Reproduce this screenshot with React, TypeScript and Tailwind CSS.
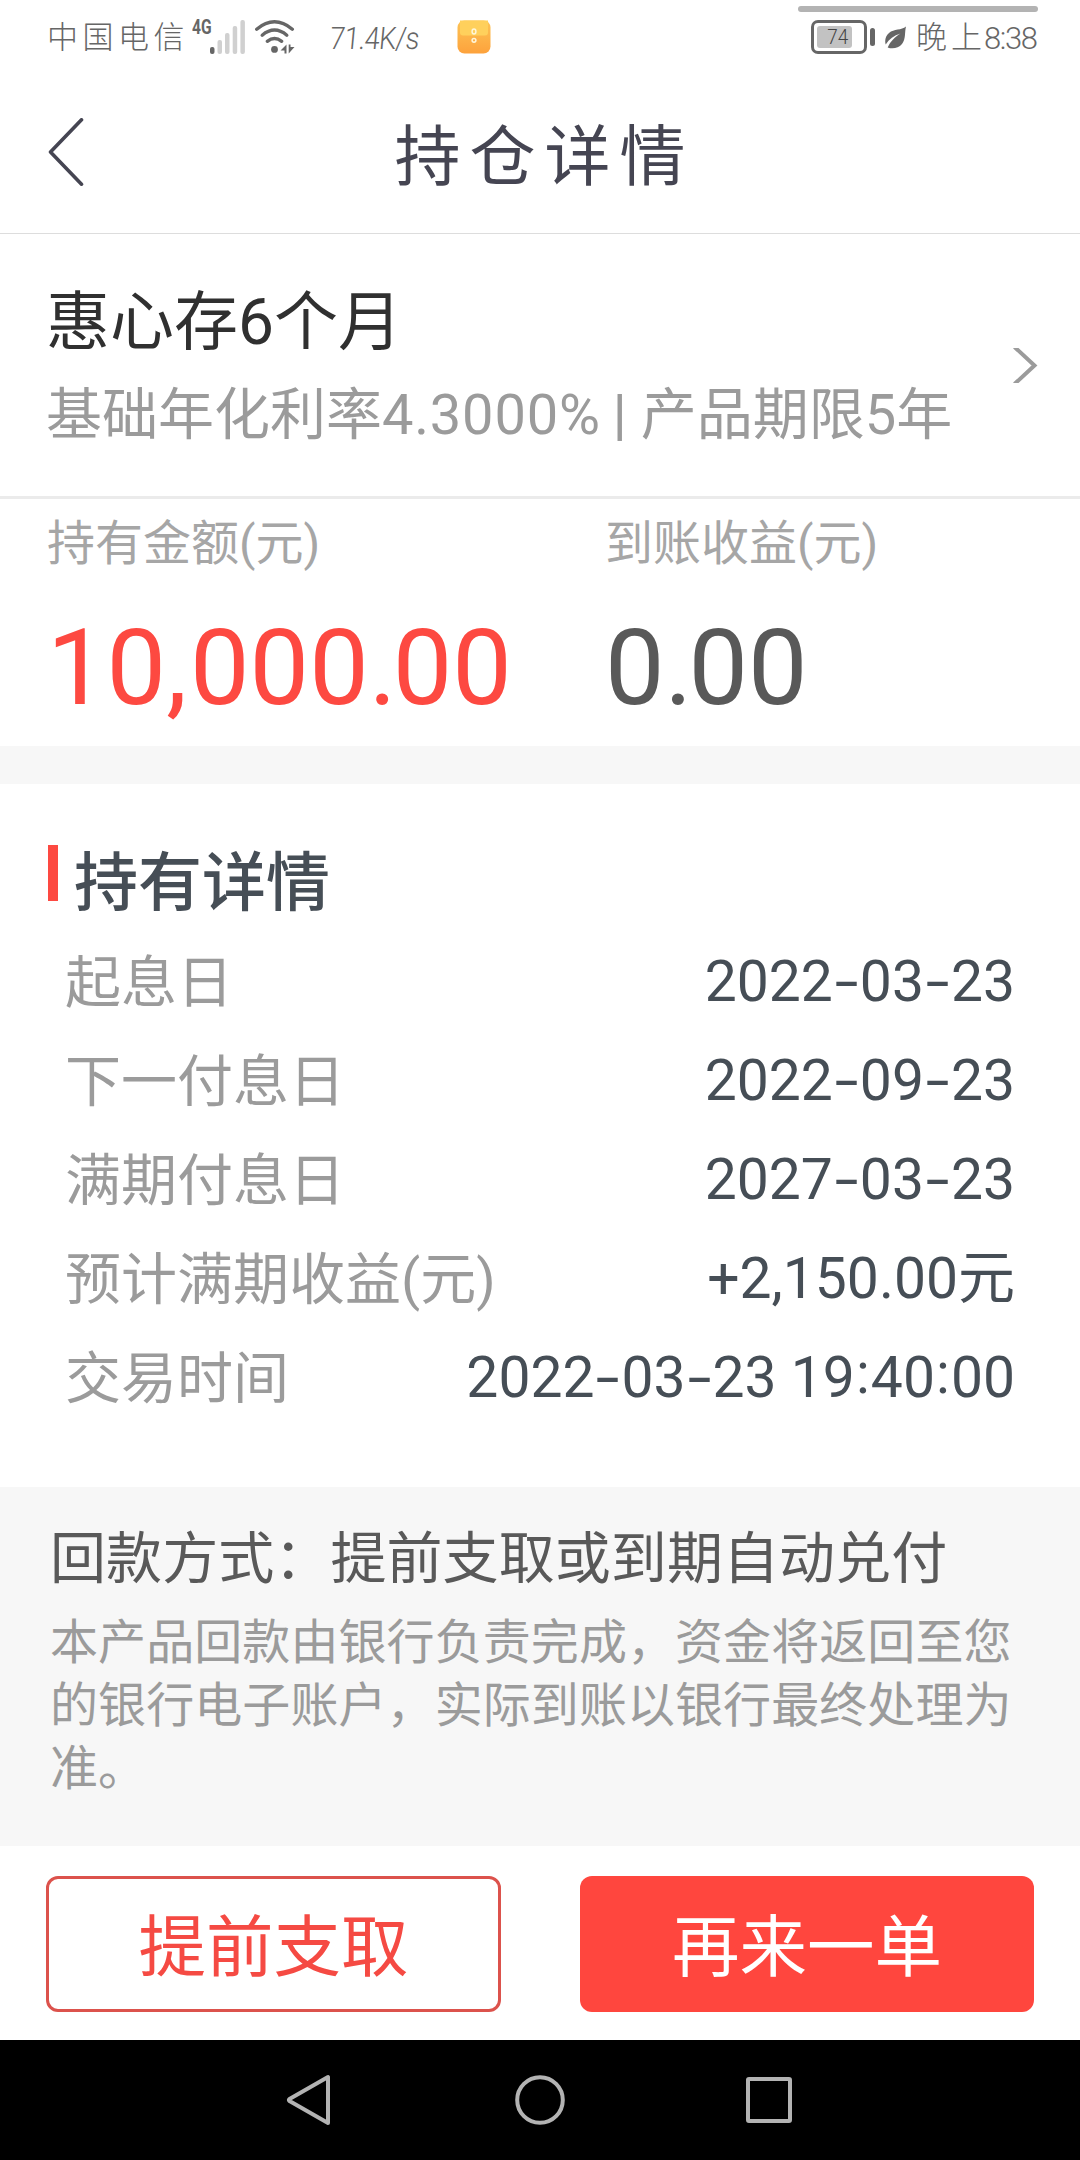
import type { ReactNode } from "react";

const details = [
  { label: "起息日", value: "2022-03-23" },
  { label: "下一付息日", value: "2022-09-23" },
  { label: "满期付息日", value: "2027-03-23" },
  { label: "预计满期收益(元)", value: "+2,150.00元" },
  { label: "交易时间", value: "2022-03-23 19:40:00" },
];

// Roboto's hyphen is short and its colon sits low, so dates adjust both
function DateText({ children }: { children: string }) {
  return (
    <>
      {children.split(/([-:])/).map((part, i) => {
        if (part === "-") {
          return <span key={i} className="inline-block w-[27px] origin-center scale-x-150 text-center">-</span>;
        }
        if (part === ":") {
          return <span key={i} className="relative -top-[4px] inline-block w-[16px] text-center">:</span>;
        }
        return <span key={i}>{part}</span>;
      })}
    </>
  );
}

function SignalIcon() {
  return (
    <svg width="36" height="34" viewBox="0 0 36 34" className="block">
      <rect x="0" y="27" width="4.5" height="7" rx="2" fill="#666" />
      <rect x="7.5" y="20" width="4.5" height="14" rx="2" fill="#d0d0d0" />
      <rect x="15" y="13" width="4.5" height="21" rx="2" fill="#d0d0d0" />
      <rect x="22.7" y="6" width="4.5" height="28" rx="2" fill="#d0d0d0" />
      <rect x="30.4" y="0" width="4.5" height="34" rx="2" fill="#d0d0d0" />
    </svg>
  );
}

function WifiIcon() {
  return (
    <svg width="40" height="34" viewBox="0 0 40 34" className="block" fill="none" stroke="#666" strokeWidth="3.4" strokeLinecap="round">
      <path d="M1.7 9.2Q19.5 -5.5 37.3 9.2" />
      <path d="M7.2 15.2Q19.5 5 31.8 15.2" />
      <path d="M12.3 21.3Q19.5 15.8 26.7 21.3" />
      <circle cx="19.5" cy="29.4" r="3.4" fill="#666" stroke="none" />
      <path d="M31.500 24.500v9h-2v-3h-4zM33.700 33.500v-9h1.800v2.500h4z" fill="#666" stroke="none" />
    </svg>
  );
}

function AppBadge() {
  return (
    <svg width="34" height="34" viewBox="0 0 34 34" className="block">
      <defs>
        <linearGradient id="badge" x1="0" y1="0" x2="0" y2="1">
          <stop offset="0" stopColor="#fdc455" />
          <stop offset="1" stopColor="#fda23c" />
        </linearGradient>
      </defs>
      <rect x="0.5" y="0.5" width="33" height="33" rx="7" fill="url(#badge)" />
      <path d="M3 0.500h28v12q0 3-3 3H6q-3 0-3-3z" fill="#ffd05c" />
      <ellipse cx="17" cy="11.5" rx="1.9" ry="2.5" fill="none" stroke="#fff6d8" strokeWidth="1.5" />
      <circle cx="17" cy="20.3" r="1.9" fill="none" stroke="#fff6d8" strokeWidth="1.5" />
    </svg>
  );
}

function BatteryIcon() {
  return (
    <div className="flex h-[34px] items-center gap-[3px]">
      <div className="flex h-[34px] w-[56px] items-center rounded-[7px] border-[3px] border-[#666] pl-[3px]">
        <div className="flex h-[22px] w-[35px] items-center justify-end rounded-[3px] bg-[#c2c2c2] pr-1 text-[21px] leading-none font-light text-[#444]">
          <span className="origin-right scale-x-90">74</span>
        </div>
      </div>
      <div className="h-[18px] w-[5px] rounded-full bg-[#666]" />
    </div>
  );
}

function LeafIcon() {
  return (
    <svg width="22" height="23" viewBox="0 0 22 23" className="block">
      <path d="M21 0.500C16.500 4.500 9 2.500 4 7C0.500 10 -0.500 14.500 0.700 18.500C4 13 9 9.500 15.500 7.500C10 11 5.500 15 2.700 21.500C7 23.200 13.500 22.500 17 18C21 13 19.500 6.500 21 0.500z" fill="#666" />
    </svg>
  );
}

function StatusBar() {
  return (
    <div className="relative flex h-[73px] items-start pt-5 pr-[43px] pl-[47px] text-[#666]">
      <div className="absolute top-[6px] left-[798px] h-[6px] w-[240px] rounded-full bg-[#b3b3b3]" />
      <span className="w-[145px] text-[31px] leading-[36px] font-light tracking-[4.5px] whitespace-nowrap">中国电信</span>
      <span className="w-[18px] origin-left scale-x-[0.78] text-[20px] leading-[15px] font-bold">4G</span>
      <SignalIcon />
      <div className="ml-[9px]">
        <WifiIcon />
      </div>
      <span className="ml-[35px] w-[90px] origin-left scale-x-[0.88] -skew-x-6 text-[31px] leading-[37px] font-light tracking-[-0.8px] whitespace-nowrap">71.4K/s</span>
      <div className="ml-[37px]">
        <AppBadge />
      </div>
      <div className="ml-auto flex items-start">
        <BatteryIcon />
        <div className="mt-[6px] ml-[10px]">
          <LeafIcon />
        </div>
        <span className="ml-[9px] w-[68px] text-[31px] leading-[36px] font-light tracking-[4px] whitespace-nowrap">晚上</span>
        <span className="w-[53px] text-[31px] leading-[37px] font-light tracking-[-1.4px] whitespace-nowrap">8:38</span>
      </div>
    </div>
  );
}

function Header() {
  return (
    <header className="flex h-[161px] items-center justify-between border-b border-[#ddd] px-[48px] pb-[2px]">
      <svg width="36" height="68" viewBox="0 0 36 68" fill="none" stroke="#454552" strokeWidth="3.6" strokeLinecap="round" strokeLinejoin="round">
        <path d="M33.500 1.800L2.500 34L33.500 66.200" />
      </svg>
      <h1 className="pt-[12px] pl-[9px] text-[66px] leading-[80px] tracking-[9px] text-[#454552]">持仓详情</h1>
      <div className="w-[36px]" />
    </header>
  );
}

function Amount({ label, className, children }: { label: string; className: string; children: ReactNode }) {
  return (
    <div className="w-[558px] shrink-0">
      <div className="pt-[15px] text-[48px] leading-[60px] text-[#a6a6a6]">{label}</div>
      <div className={"mt-[39px] text-[106px] leading-[110px] " + className}>{children}</div>
    </div>
  );
}

export default function App() {
  return (
    <div className="h-[2160px] w-[1080px] overflow-hidden bg-white font-['Roboto','Noto_Sans_CJK_SC',sans-serif]">
      <StatusBar />
      <Header />

      {/* Product */}
      <section className="flex h-[265px] items-center justify-between border-b-[3px] border-[#ebebeb] pr-[42px] pl-[46px]">
        <div className="pt-[10px]">
          <h2 className="text-[64px] leading-[90px] text-[#303030]">惠心存6个月</h2>
          <p className="text-[56px] leading-[94px] whitespace-nowrap text-[#9b9b9b]">
            基础年化利率<span className="tracking-[0.8px]">4.3000%</span>
            <span className="mr-[14px] ml-[12px] font-medium">|</span>产品期限5年
          </p>
        </div>
        <svg width="25" height="35" viewBox="0 0 25 35" fill="none" stroke="#9b9b9b" strokeWidth="4">
          <path d="M1.500 -1L21.500 17.500L1.500 36" />
        </svg>
      </section>

      {/* Amounts */}
      <section className="flex h-[247px] overflow-hidden pl-[47px]">
        <Amount label="持有金额(元)" className="text-[#fd4941]">
          10<span className="tracking-[3px]">,</span>000<span className="tracking-[-4px]">.</span>00
        </Amount>
        <Amount label="到账收益(元)" className="text-[#595959]">
          0<span className="tracking-[-4px]">.</span>00
        </Amount>
      </section>
      <div className="h-[38px] bg-[#f7f7f7]" />

      {/* Details */}
      <section className="h-[703px] pt-[51px]">
        <div className="flex pl-[48px]">
          <div className="mt-[10px] h-[56px] w-[10px] bg-[#fd4941]" />
          <h3 className="ml-[16px] text-[64px] leading-[97px] font-medium text-[#464e56]">持有详情</h3>
        </div>
        {details.map(({ label, value }) => (
          <div key={label} className="flex h-[99px] items-center justify-between pr-[65px] pl-[65px]">
            <span className="pt-[4px] text-[56px] leading-[95px] text-[#9b9b9b]">{label}</span>
            <span className="text-[57px] leading-[99px] text-[#464e56]">
              <DateText>{value}</DateText>
            </span>
          </div>
        ))}
      </section>

      {/* Repayment note */}
      <section className="h-[359px] bg-[#f7f7f7] pt-[32px] pl-[50px]">
        <h4 className="text-[56px] leading-[80px] tracking-[0.08px] text-[#595959]">回款方式：提前支取或到期自动兑付</h4>
        <p className="mt-[12px] w-[966px] text-[48px] leading-[63px] tracking-[0.08px] text-[#9b9b9b]">
          本产品回款由银行负责完成，资金将返回至您的银行电子账户，实际到账以银行最终处理为准。
        </p>
      </section>

      {/* Actions */}
      <section className="flex h-[194px] items-start justify-between bg-white pt-[30px] pr-[46px] pl-[46px]">
        <button className="h-[136px] w-[455px] rounded-[12px] border-[3px] border-[#dc524c] pt-[7px] text-[67.5px] text-[#f54a43]">提前支取</button>
        <button className="h-[136px] w-[454px] rounded-[12px] bg-[#ff463e] pt-[7px] text-[67.5px] text-white">再来一单</button>
      </section>

      {/* Android navigation */}
      <nav className="flex h-[120px] items-center bg-black pl-[286px]">
        <svg width="46" height="52" viewBox="0 0 46 52" fill="none" stroke="#b3b3b3" strokeWidth="4" strokeLinejoin="round">
          <path d="M42 3V49L3.500 27Q2.500 26 3.500 25z" />
        </svg>
        <svg width="50" height="50" viewBox="0 0 50 50" fill="none" stroke="#b3b3b3" strokeWidth="4" className="ml-[183px]">
          <circle cx="25" cy="25" r="22.8" />
        </svg>
        <div className="ml-[181px] h-[46px] w-[46px] rounded-[3px] border-4 border-[#b3b3b3]" />
      </nav>
    </div>
  );
}
